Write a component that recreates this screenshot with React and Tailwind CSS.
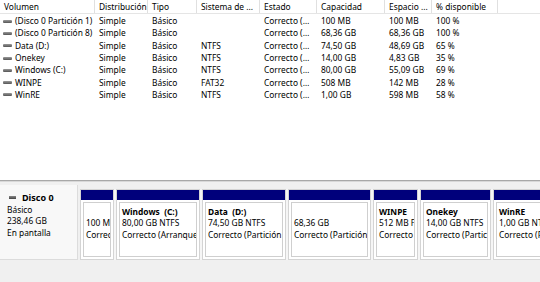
import React from "react";

const cols = [
  { label: "Volumen", w: "w-[95px]" },
  { label: "Distribución", w: "w-[53px]" },
  { label: "Tipo", w: "w-[49px]" },
  { label: "Sistema de ...", w: "w-[63px]" },
  { label: "Estado", w: "w-[57px]" },
  { label: "Capacidad", w: "w-[68px]" },
  { label: "Espacio ...", w: "w-[47px]" },
  { label: "% disponible", w: "w-[66px]" },
];

const rows = [
  ["(Disco 0 Partición 1)", "Simple", "Básico", "", "Correcto (…", "100 MB", "100 MB", "100 %"],
  ["(Disco 0 Partición 8)", "Simple", "Básico", "", "Correcto (…", "68,36 GB", "68,36 GB", "100 %"],
  ["Data (D:)", "Simple", "Básico", "NTFS", "Correcto (…", "74,50 GB", "48,69 GB", "65 %"],
  ["Onekey", "Simple", "Básico", "NTFS", "Correcto (…", "14,00 GB", "4,83 GB", "35 %"],
  ["Windows (C:)", "Simple", "Básico", "NTFS", "Correcto (…", "80,00 GB", "55,09 GB", "69 %"],
  ["WINPE", "Simple", "Básico", "FAT32", "Correcto (…", "508 MB", "142 MB", "28 %"],
  ["WinRE", "Simple", "Básico", "NTFS", "Correcto (…", "1,00 GB", "598 MB", "58 %"],
];

const parts = [
  { w: "w-[34px]", name: "", size: "100 MB", state: "Correcto" },
  { w: "w-[84px]", name: "Windows\u00a0 (C:)", size: "80,00 GB NTFS", state: "Correcto (Arranque" },
  { w: "w-[84px]", name: "Data\u00a0 (D:)", size: "74,50 GB NTFS", state: "Correcto (Partición" },
  { w: "w-[83px]", name: "", size: "68,36 GB", state: "Correcto (Partición" },
  { w: "w-[45px]", name: "WINPE", size: "512 MB FAT32", state: "Correcto" },
  { w: "w-[71px]", name: "Onekey", size: "14,00 GB NTFS", state: "Correcto (Partición" },
  { w: "w-[53px]", name: "WinRE", size: "1,00 GB NTFS", state: "Correcto (P" },
];

const VolIcon = () => (
  <span className="inline-block w-[9px] h-[3px] mr-[3px] bg-gradient-to-b from-[#9a9a9a] to-[#555] rounded-[1px]" />
);

const App = () => {
  return (
    <div className="w-[540px] h-[282px] overflow-hidden bg-[#f0f0f0] text-[8.4px] text-black font-['Noto_Sans',sans-serif]">
      {/* volume list */}
      <div className="h-[180px] bg-white">
        <div className="flex h-[14px] border-b border-[#e5e5e5]">
          {cols.map((c) => (
            <div key={c.label} className={`${c.w} shrink-0 border-r border-[#e0e0e0] pl-[4px] flex items-center whitespace-nowrap leading-[12px]`}>
              {c.label}
            </div>
          ))}
        </div>
        <div className="pt-[1px]">
          {rows.map((r) => (
            <div key={r[0]} className="flex h-[12.3px] items-center leading-[12px]">
              {r.map((v, i) => (
                <div key={i} className={`${cols[i].w} shrink-0 whitespace-nowrap flex items-center ${i === 0 ? "pl-[3px]" : "pl-[4px]"}`}>
                  {i === 0 && <VolIcon />}
                  {v}
                </div>
              ))}
            </div>
          ))}
        </div>
      </div>

      {/* splitter */}
      <div className="h-[2px] bg-[#a8a8a8] border-b border-[#d8d8d8]" />

      {/* disk row */}
      <div className="flex mt-[3px] h-[75px]">
        <div className="w-[78px] shrink-0 bg-[#f8f8f8] border-r border-b border-[#dcdcdc] pl-[7px] pt-[7px] leading-[11.7px]">
          <div className="flex items-center">
            <span className="inline-block w-[7px] h-[3px] mr-[6px] ml-[2px] bg-gradient-to-b from-[#8a8a8a] to-[#444]" />
            <span className="font-bold text-[9px]">Disco 0</span>
          </div>
          <div>Básico</div>
          <div>238,46 GB</div>
          <div>En pantalla</div>
        </div>
        <div className="flex flex-1 ml-[2px] mt-[4px] gap-[2px] h-[71px] bg-[#f6f6f6]">
          {parts.map((p, i) => (
            <div key={i} className={`${p.w} shrink-0 flex flex-col bg-white border border-[#d4d4d4]`}>
              <div className="h-[10px] bg-[#00007b] shrink-0" />
              <div className="flex-1 p-[2px]">
                <div className="h-full border border-[#cfcfcf] pl-[2px] pt-[3px] leading-[11.3px] whitespace-nowrap overflow-hidden">
                  <div className="font-bold h-[11.3px]">{p.name}</div>
                  <div>{p.size}</div>
                  <div>{p.state}</div>
                </div>
              </div>
            </div>
          ))}
        </div>
      </div>
    </div>
  );
};

export default App;
